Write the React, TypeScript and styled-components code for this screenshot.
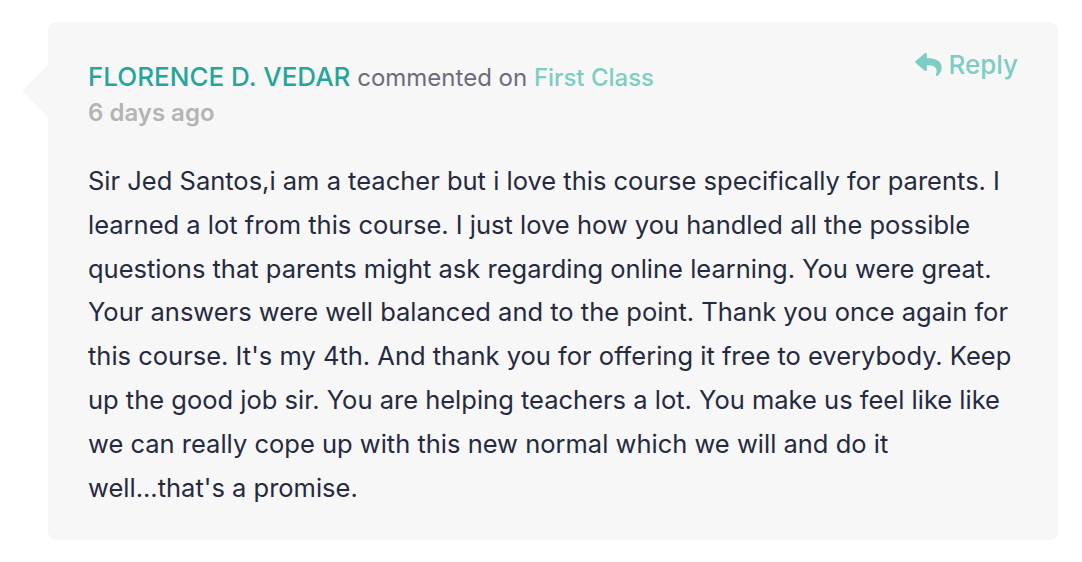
import React from 'react';
import styled, { createGlobalStyle } from 'styled-components';

const GlobalStyle = createGlobalStyle`
  html, body {
    margin: 0;
    padding: 0;
    background: #ffffff;
  }
  body {
    font-family: Inter, "Noto Sans", "Liberation Sans", sans-serif;
    -webkit-font-smoothing: antialiased;
  }
`;

const Page = styled.div`
  padding: 22px 24px 22px 48px;
`;

const Card = styled.article`
  position: relative;
  background: #f7f7f7;
  border-radius: 8px;
  padding: 39px 40px 31px 40px;
  box-sizing: border-box;

  /* speech pointer on the left side */
  &::before {
    content: '';
    position: absolute;
    left: -26px;
    top: 43px;
    border-style: solid;
    border-width: 26px 26px 26px 0;
    border-color: transparent #f7f7f7 transparent transparent;
  }
`;

const Header = styled.header`
  display: flex;
  justify-content: space-between;
  align-items: flex-start;
`;

const Meta = styled.div`
  display: flex;
  flex-direction: column;
  gap: 3px;
`;

const Byline = styled.div`
  font-size: 24px;
  line-height: 32px;
  color: #6c6c7c;
`;

const Author = styled.a`
  color: #26a69a;
  font-size: 26px;
  font-weight: 500;
  text-transform: uppercase;
  text-decoration: none;
`;

const Course = styled.a`
  color: #7ccdc2;
  font-weight: 500;
  text-decoration: none;
`;

const Time = styled.div`
  font-size: 24px;
  line-height: 32px;
  font-weight: 600;
  color: #b4b4b4;
`;

const ReplyButton = styled.button`
  display: flex;
  align-items: center;
  gap: 6px;
  margin-top: -12px;
  padding: 0;
  border: 0;
  background: none;
  font-family: inherit;
  font-size: 26px;
  font-weight: 500;
  color: #7ccdc2;
  cursor: pointer;
`;

const Body = styled.p`
  margin: 30px 0 0;
  font-size: 25.5px;
  line-height: 43.8px;
  color: #262a3e;
`;

// curved "reply" arrow
const ReplyIcon = () => (
  <svg width="27" height="23" viewBox="0 32 512 448" fill="currentColor">
    <path d="M8.309 189.836L184.313 37.851C199.719 24.546 224 35.347 224 56.015v80.053c160.629 1.839 288 34.032 288 186.258 0 61.441-39.581 122.309-83.333 154.132-13.653 9.931-33.111-2.533-28.077-18.631 45.344-145.012-21.507-183.51-176.59-185.742V360c0 20.7-24.3 31.453-39.687 18.164l-176.004-152c-11.071-9.562-11.086-26.753 0-36.328z" />
  </svg>
);

const App = () => (
  <>
    <GlobalStyle />
    <Page>
      <Card>
        <Header>
          <Meta>
            <Byline>
              <Author href="#">Florence D. Vedar</Author> commented on{' '}
              <Course href="#">First Class</Course>
            </Byline>
            <Time>6 days ago</Time>
          </Meta>
          <ReplyButton>
            <ReplyIcon />
            Reply
          </ReplyButton>
        </Header>
        <Body>
          Sir Jed Santos,i am a teacher but i love this course specifically for parents. I
          learned a lot from this course. I just love how you handled all the possible
          questions that parents might ask regarding online learning. You were great.
          Your answers were well balanced and to the point. Thank you once again for
          this course. It's my 4th. And thank you for offering it free to everybody. Keep
          up the good job sir. You are helping teachers a lot. You make us feel like like
          we can really cope up with this new normal which we will and do it
          well...that's a promise.
        </Body>
      </Card>
    </Page>
  </>
);

export default App;
